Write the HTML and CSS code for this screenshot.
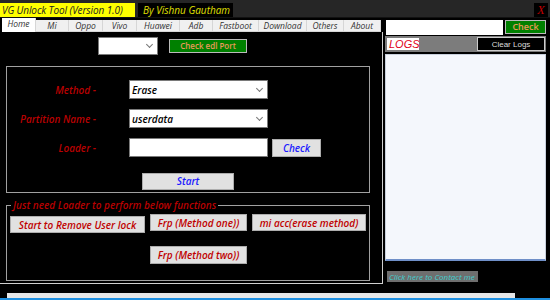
FILE: index.html
```html
<!DOCTYPE html>
<html lang="en">
<head>
  <meta charset="UTF-8" />
  <title>VG Unlock Tool</title>
  <link rel="stylesheet" href="styles.css">
</head>
<body>
  <div class="window">
    <div class="titlebar">
      <span class="app-name">VG Unlock Tool (Version 1.0)</span>
      <span class="author">By Vishnu Gautham</span>
      <span class="close">X</span>
    </div>

    <div class="main">
      <div class="left">
        <div class="tabs">
          <span class="tab active">Home</span>
          <span class="tab w-mi">Mi</span>
          <span class="tab w-oppo">Oppo</span>
          <span class="tab w-vivo">Vivo</span>
          <span class="tab w-huawei">Huawei</span>
          <span class="tab w-adb">Adb</span>
          <span class="tab w-fastboot">Fastboot</span>
          <span class="tab w-download">Download</span>
          <span class="tab w-others">Others</span>
          <span class="tab w-about">About</span>
        </div>

        <div class="tab-page">
          <div class="port-row">
            <div class="combo port-combo"><span></span><i class="chev"></i></div>
            <button class="btn-edl">Check edl Port</button>
          </div>

          <div class="group">
            <div class="form-grid">
              <label>Method -</label>
              <div class="combo"><span>Erase</span><i class="chev"></i></div>
              <span></span>

              <label>Partition Name -</label>
              <div class="combo"><span>userdata</span><i class="chev"></i></div>
              <span></span>

              <label>Loader -</label>
              <input type="text" class="loader-input" />
              <button class="btn btn-blue btn-check">Check</button>
            </div>
            <div class="start-row">
              <button class="btn btn-blue btn-start">Start</button>
            </div>
          </div>

          <fieldset class="group2">
            <legend>Just need Loader to perform below functions</legend>
            <div class="fn-grid">
              <button class="btn btn-red fn-userlock">Start to Remove User lock</button>
              <button class="btn btn-red">Frp (Method one))</button>
              <button class="btn btn-red">mi acc(erase method)</button>
              <span></span>
              <button class="btn btn-red fn-two">Frp (Method two))</button>
            </div>
          </fieldset>
        </div>
      </div>

      <div class="right">
        <div class="check-row">
          <input type="text" class="check-input" />
          <button class="btn-green">Check</button>
        </div>
        <div class="logs-bar">
          <span class="logs-label">LOGS</span>
          <button class="btn-clear">Clear Logs</button>
        </div>
        <div class="log-box"></div>
        <a class="contact">Click here to Contact me</a>
      </div>
    </div>

    <div class="footer">
      <div class="strip"></div>
    </div>
  </div>
</body>
</html>
```

FILE: styles.css
```css
:root {
  --red: #b80000;
  --btn: #e1e1e1;
  --btn-border: #adadad;
  --frame: #a0a0a0;
}

* {
  box-sizing: border-box;
}

body {
  margin: 0;
  background: #000;
  font-family: "Open Sans", "Noto Sans", sans-serif;
  width: 550px;
  height: 300px;
  overflow: hidden;
}

button {
  font-family: inherit;
  cursor: pointer;
  padding: 0;
}

.window {
  display: flex;
  flex-direction: column;
  height: 300px;
}

/* title bar */
.titlebar {
  height: 18px;
  background: #262626;
  display: flex;
  align-items: flex-start;
  padding-top: 3px;
  border-bottom: 1px solid #111;
}

.app-name {
  background: #ffff00;
  color: #222;
  font-style: italic;
  font-size: 10px;
  line-height: 14px;
  width: 135px;
  padding-left: 2px;
  white-space: nowrap;
  letter-spacing: -0.1px;
}

.author {
  background: #000;
  color: #e0e000;
  font-style: italic;
  font-size: 10px;
  line-height: 14px;
  margin-left: 3px;
  width: 95px;
  padding-left: 5px;
  white-space: nowrap;
}

.close {
  margin-left: auto;
  margin-right: 2px;
  background: #000;
  color: #c00000;
  font-family: "Liberation Serif", serif;
  font-style: italic;
  font-size: 12px;
  line-height: 14px;
  width: 14px;
  text-align: center;
}

.main {
  display: flex;
  height: 266px;
}

/* left side with tabs */
.left {
  width: 384px;
  display: flex;
  flex-direction: column;
}

.tabs {
  display: flex;
  height: 13px;
  margin-top: 1px;
  padding-left: 2px;
  align-items: flex-end;
}

.tab {
  background: #f0f0f0;
  border-right: 1px solid #d6d6d6;
  border-bottom: 1px solid #d6d6d6;
  height: 12px;
  font-size: 8.5px;
  font-style: italic;
  color: #333;
  text-align: center;
  line-height: 12px;
  width: 34px;
  white-space: nowrap;
}

.tab.active {
  background: #fff;
  height: 14px;
  line-height: 12px;
  border-bottom: none;
  margin-top: -2px;
}

.w-mi { width: 33px; }
.w-oppo { width: 34px; }
.w-vivo { width: 34px; }
.w-huawei { width: 43px; }
.w-adb { width: 33px; }
.w-fastboot { width: 46px; }
.w-download { width: 48px; }
.w-others { width: 37px; }
.w-about { width: 37px; }

.tab-page {
  flex: 1;
  background: #000;
  border-right: 1px solid #d0d0d0;
  border-bottom: 1px solid #d0d0d0;
  margin-right: 1px;
}

.port-row {
  display: flex;
  align-items: center;
  padding: 5px 0 0 98px;
}

.combo {
  background: #fff;
  border: 1px solid #7a7a7a;
  height: 19px;
  display: flex;
  align-items: center;
  font-size: 10px;
  font-weight: 600;
  font-style: italic;
  color: #000;
  padding-left: 2px;
}

.combo span {
  flex: 1;
}

.chev {
  width: 5px;
  height: 5px;
  border-right: 1px solid #777;
  border-bottom: 1px solid #777;
  transform: rotate(45deg);
  margin: -3px 5px 0 0;
}

.port-combo {
  width: 60px;
  height: 18px;
}

.btn-edl {
  margin-left: 11px;
  width: 78px;
  height: 14px;
  background: #008000;
  border: 1px solid #bbb;
  color: #e89a5a;
  font-size: 8px;
  font-weight: 600;
  line-height: 12px;
}

/* first group */
.group {
  margin: 11px 0 0 6px;
  width: 364px;
  height: 127px;
  border: 1px solid var(--frame);
  padding-top: 13px;
}

.form-grid {
  display: grid;
  grid-template-columns: 122px 143px 49px;
  row-gap: 10px;
  align-items: center;
}

.form-grid label {
  color: var(--red);
  font-style: italic;
  font-weight: 600;
  font-size: 10px;
  text-align: right;
  padding-right: 33px;
  white-space: nowrap;
}

.form-grid .combo,
.form-grid .loader-input {
  width: 139px;
}

.loader-input {
  height: 19px;
  border: 1px solid #7a7a7a;
  background: #fff;
}

.btn {
  background: var(--btn);
  border: 1px solid var(--btn-border);
  font-style: italic;
  font-weight: 600;
  font-size: 10px;
}

.btn-blue {
  color: #1a1aff;
}

.btn-red {
  color: #c00000;
  height: 17px;
}

.btn-check {
  width: 49px;
  height: 18px;
}

.start-row {
  padding: 11px 0 0 135px;
}

.btn-start {
  width: 92px;
  height: 17px;
}

/* second group */
.group2 {
  margin: 5px 0 0 6px;
  width: 364px;
  height: 83px;
  border: 1px solid var(--frame);
  padding: 0 0 0 3px;
}

.group2 legend {
  color: var(--red);
  font-style: italic;
  font-weight: 600;
  font-size: 10px;
  padding: 0 2px;
  margin-left: 1px;
  line-height: 14px;
}

.fn-grid {
  display: grid;
  grid-template-columns: 135px 97px 114px;
  column-gap: 5px;
  row-gap: 13px;
  align-items: start;
  padding-top: 2px;
}

.fn-userlock {
  margin-top: 2px;
  height: 17px;
}

.fn-two {
  height: 18px;
}

/* right side */
.right {
  width: 166px;
  padding: 2px 4px 0 1px;
  display: flex;
  flex-direction: column;
}

.check-row {
  display: flex;
  gap: 2px;
  height: 15px;
  padding-left: 1px;
}

.check-input {
  width: 117px;
  height: 15px;
  border: none;
  background: #fff;
}

.btn-green {
  width: 41px;
  height: 14px;
  background: #008000;
  border: 1px solid #bbb;
  color: #e89a5a;
  font-size: 9px;
  font-weight: 600;
  line-height: 12px;
}

.logs-bar {
  margin-top: 1px;
  height: 16px;
  background: #7c7c7c;
  display: flex;
  align-items: center;
  justify-content: space-between;
  padding: 0 1px 0 2px;
}

.logs-label {
  background: #fff;
  color: #e00020;
  font-family: "Liberation Sans", sans-serif;
  font-style: italic;
  font-size: 11px;
  line-height: 12px;
  padding: 0 2px;
  width: 32px;
}

.btn-clear {
  width: 68px;
  height: 14px;
  background: #000;
  border: 1px solid #ccc;
  color: #ddd;
  font-family: "Liberation Sans", sans-serif;
  font-size: 8px;
}

.log-box {
  margin-top: 2px;
  height: 207px;
  background: #f4f7fc;
  border: 1px solid #c8d0dc;
  border-bottom: 2px solid #6f8fc8;
}

.contact {
  align-self: flex-start;
  margin: 10px 0 0 2px;
  background: #6e6e6e;
  color: #40d0d0;
  font-style: italic;
  font-size: 8px;
  line-height: 11px;
  padding: 0 2px;
  width: 91px;
  white-space: nowrap;
}

/* bottom */
.footer {
  flex: 1;
  display: flex;
  flex-direction: column;
  justify-content: flex-end;
  border-bottom: 2px solid #1e8fe0;
}

.strip {
  margin: 0 35px 0 7px;
  height: 5px;
  background: #e6e6e6;
}
```
